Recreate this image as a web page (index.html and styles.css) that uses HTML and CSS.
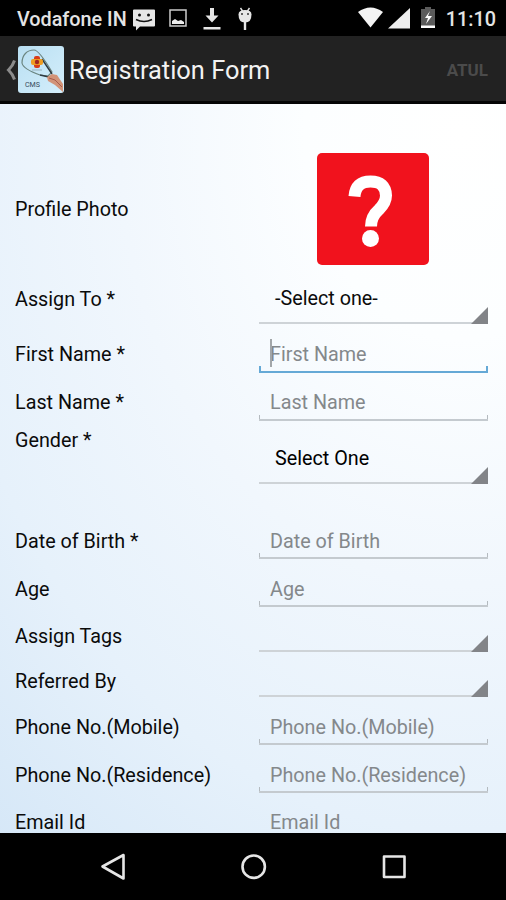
FILE: index.html
```html
<!DOCTYPE html>
<html lang="en">
<head>
<meta charset="utf-8">
<title>Registration Form</title>
<link rel="stylesheet" href="styles.css">
</head>
<body>
<div class="screen">
  <header class="status">
    <span class="carrier">Vodafone IN</span>
    <svg class="status-left" width="124" height="36" viewBox="131 0 124 36">
      <path fill="#e6e6e6" d="M134 9.500h20q1 0 1 1v15q0 1-1 1h-14l-4 4v-4h-2q-1 0-1-1v-15q0-1 1-1z"/>
      <circle cx="139.500" cy="15" r="1.500" fill="#111"/><circle cx="148.500" cy="15" r="1.500" fill="#111"/>
      <path d="M136 19.500q8 4 16 0" fill="none" stroke="#111" stroke-width="1.600"/>
      <path d="M170 10h16v16h-16z" fill="#000" stroke="#ccc" stroke-width="1.500"/>
      <path d="M172 24v-3l3-2 3 2 3-1 3 2v2z" fill="#eee"/>
      <path d="M210 8h4v7.500h4.500l-6.500 7-6.500-7h4.500zM203.500 27h17v2.500h-17z" fill="#e6e6e6"/>
      <path d="M238.500 14.500q0-4.500 6.500-4.500t6.500 4.500q0 8-6.500 8t-6.500-8z" fill="#e6e6e6"/>
      <path d="M240.500 8l2 3M249.500 8l-2 3" stroke="#e6e6e6" stroke-width="1.400" fill="none"/>
      <path d="M245 22v8" stroke="#e6e6e6" stroke-width="2.400"/>
      <circle cx="242" cy="14" r="1" fill="#333"/><circle cx="248" cy="14" r="1" fill="#333"/>
    </svg>
    <svg class="status-right" width="80" height="36" viewBox="356 0 80 36">
      <path d="M358 12q12.500-9 25 0L370.500 27.500z" fill="#f4f4f4"/>
      <path d="M388 28.500L410 8v20.500z" fill="#eee"/>
      <path d="M421 9h4V7h6v2h4v19h-14z" fill="#5b5b5b"/><path d="M421 25.500h14V28h-14z" fill="#fff"/>
      <path d="M430 11l-5 7h3l-2 6 6-8h-4z" fill="#fff"/>
    </svg>
    <time class="clock">11:10</time>
  </header>

  <div class="bar">
    <svg class="back" width="11" height="24" viewBox="0 0 11 24"><path d="M9.500 2.500q-1.500 5-6 9.500 4.500 4.500 6 9.500" fill="none" stroke="#8b8b8b" stroke-width="3"/></svg>
    <svg class="logo" width="46" height="47" viewBox="0 0 46 47">
      <defs><linearGradient id="sky" x2="1" y2="1"><stop stop-color="#b9dff2"/><stop offset="1" stop-color="#d4eefb"/></linearGradient></defs>
      <rect width="46" height="47" rx="3" fill="url(#sky)"/>
      <path d="M4 17C4 9 9 4 16 4q5 0 18 22l-4 4-8-1Q5 23 4 17z" fill="none" stroke="#6b8580" stroke-width="1.200"/>
      <path d="M24 13l10 15M22 29l9 2" fill="none" stroke="#2f3a40" stroke-width="1.400"/>
      <rect x="16" y="10" width="6" height="12" rx="2" fill="#d83c19"/><rect x="13" y="13" width="12" height="6" rx="2" fill="#ef9c20"/><circle cx="19" cy="16" r="2.200" fill="#a32720"/>
      <path d="M14 24h10" stroke="#99b2bc"/>
      <path d="M29 31l5-3 5 1 6 9v8l-8-7-7-4z" fill="#d29378"/><path d="M31 32l6 2 7 7" stroke="#a65b4c" fill="none"/>
      <text x="7" y="41" class="logo-text" textLength="15" lengthAdjust="spacingAndGlyphs">CMS</text>
    </svg>
    <h1 class="title">Registration Form</h1>
    <span class="user">ATUL</span>
  </div>

  <main class="form">
    <div class="row photo"><span class="label">Profile Photo</span>
      <svg class="avatar" width="112" height="112" viewBox="0 0 112 112">
        <rect width="112" height="112" rx="5" fill="#f1121d"/>
        <path d="M37.500 43.500q1-15 16-15t15.500 14q0 7-7 14-8 7-8 17" fill="none" stroke="#fff" stroke-width="12"/>
        <circle cx="53.500" cy="85.500" r="8.500" fill="#fff"/>
      </svg>
    </div>
    <div class="row assign"><span class="label">Assign To *</span><div class="field spinner">-Select one-</div></div>
    <div class="row first"><span class="label">First Name *</span><div class="field input focused"><i class="caret"></i>First Name</div></div>
    <div class="row raised"><span class="label">Last Name *</span><div class="field input">Last Name</div></div>
    <div class="row gender"><span class="label">Gender *</span><div class="field spinner">Select One</div></div>
    <div class="row"><span class="label">Date of Birth *</span><div class="field input">Date of Birth</div></div>
    <div class="row"><span class="label">Age</span><div class="field input">Age</div></div>
    <div class="row short"><span class="label">Assign Tags</span><div class="field spinner"></div></div>
    <div class="row short"><span class="label">Referred By</span><div class="field spinner"></div></div>
    <div class="row"><span class="label">Phone No.(Mobile)</span><div class="field input">Phone No.(Mobile)</div></div>
    <div class="row"><span class="label">Phone No.(Residence)</span><div class="field input">Phone No.(Residence)</div></div>
    <div class="row raised"><span class="label">Email Id</span><div class="field input">Email Id</div></div>
  </main>

  <nav class="nav">
    <svg width="506" height="67" viewBox="0 833 506 67" fill="none" stroke="#e6e6e6" stroke-width="2.600" stroke-linejoin="round">
      <path d="M102.500 866.500L123.500 855v23.500z"/><circle cx="253.700" cy="866.700" r="11.200"/><rect x="384" y="856.500" width="20.500" height="20.500"/>
    </svg>
  </nav>
</div>
</body>
</html>
```
FILE: styles.css
```css
* { box-sizing: border-box; }
body { margin: 0; font-family: Roboto, "Liberation Sans", sans-serif; background: #000; }
.screen { width: 506px; height: 900px; display: flex; flex-direction: column; overflow: hidden; }
.status { height: 36px; flex: none; display: flex; align-items: center; background: #000; color: #e4e4e4; padding: 0 10px 0 17px; font-size: 19.8px; font-weight: 500; line-height: 36px; white-space: nowrap; }
.carrier { width: 114px; padding-top: 3px; }
.status-right { margin-left: auto; }
.clock { width: 51px; margin-left: 9px; padding-top: 3px; text-align: right; }
.bar { height: 68px; flex: none; display: flex; align-items: center; background: #222; border-bottom: 3px solid #050505; padding: 2px 18px 0 5px; color: #f2f2f2; }
.back { margin-right: 2px; }
.logo-text { font: 8px Roboto, sans-serif; fill: #34495a; }
.title { margin: 0 0 0 5px; font-size: 25.4px; font-weight: 400; line-height: 30px; white-space: nowrap; }
.user { margin-left: auto; color: #4b4b4b; font-size: 17px; font-weight: 700; }
.form { height: 729px; flex: none; overflow: hidden; padding: 0 18px 0 15px; color: #0b0b0b; font-size: 19.75px; background: radial-gradient(ellipse 620px 820px at 460px 30px, #fff 0%, #fcfeff 25%, #f1f7fd 55%, #e6f1fb 85%, #d5e7f7 115%); }
.row { display: grid; grid-template-columns: 244px 229px; height: 48px; }
.label { padding-top: 18px; line-height: 26px; white-space: nowrap; }
.field { position: relative; white-space: nowrap; line-height: 26px; padding: 18px 0 0 11px; border-bottom: 2px solid #c4cacf; }
.input { color: #84888b; }
.input::before, .input::after { content: ""; position: absolute; bottom: 0; width: 1px; height: 4px; background: #b4babf; }
.input::before { left: 0; }
.input::after { right: 0; }
.focused { border-bottom-color: #65a9d6; }
.focused::before, .focused::after { width: 2px; height: 5px; background: #65a9d6; }
.caret { position: absolute; left: 11px; top: 15px; width: 2px; height: 28px; background: #a2a6a9; }
.spinner { padding-left: 16px; border-bottom-color: #ced3d7; }
.spinner::after { content: ""; position: absolute; right: 0; bottom: -2px; width: 17px; height: 17px; background: #828488; clip-path: polygon(100% 0, 100% 100%, 0 100%); }
.photo { height: 166px; }
.photo .label { padding-top: 93px; }
.avatar { margin: 49px 0 0 58px; }
.assign { height: 54px; }
.assign .label { padding-top: 17px; }
.assign .field { padding-top: 16px; }
.first { height: 49px; }
.raised .label, .raised .field { padding-top: 17px; line-height: 25px; }
.gender { height: 63px; margin-bottom: 27px; }
.gender .label { padding-top: 7px; }
.gender .field { padding-top: 25px; color: #000; }
.short { height: 45px; }
.short .label { padding-top: 17px; }
.nav { height: 67px; background: #000; }
```
